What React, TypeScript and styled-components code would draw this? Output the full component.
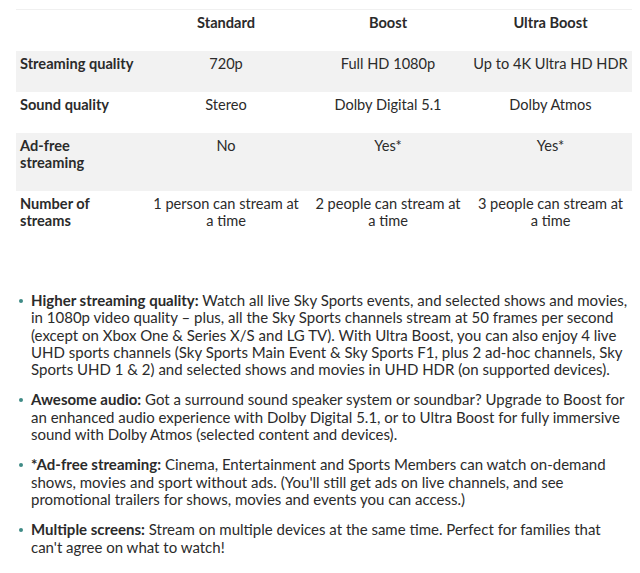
import styled, { createGlobalStyle } from "styled-components";

const GlobalStyle = createGlobalStyle`
    body {
        margin: 0;
        background: white;
        font-family: Lato, "Liberation Sans", sans-serif;
        color: #2b2b2b;
    }
`;

const plans = ["Standard", "Boost", "Ultra Boost"];

const rows = [
    { label: "Streaming quality", values: ["720p", "Full HD 1080p", "Up to 4K Ultra HD HDR"] },
    { label: "Sound quality", values: ["Stereo", "Dolby Digital 5.1", "Dolby Atmos"] },
    { label: "Ad-free streaming", values: ["No", "Yes*", "Yes*"] },
    {
        label: "Number of streams",
        values: [
            "1 person can stream at\na time",
            "2 people can stream at\na time",
            "3 people can stream at\na time",
        ],
    },
];

const notes = [
    {
        title: "Higher streaming quality:",
        text: "Watch all live Sky Sports events, and selected shows and movies, in 1080p video quality – plus, all the Sky Sports channels stream at 50 frames per second (except on Xbox One & Series X/S and LG TV). With Ultra Boost, you can also enjoy 4 live UHD sports channels (Sky Sports Main Event & Sky Sports F1, plus 2 ad-hoc channels, Sky Sports UHD 1 & 2) and selected shows and movies in UHD HDR (on supported devices).",
    },
    {
        title: "Awesome audio:",
        text: "Got a surround sound speaker system or soundbar? Upgrade to Boost for an enhanced audio experience with Dolby Digital 5.1, or to Ultra Boost for fully immersive sound with Dolby Atmos (selected content and devices).",
    },
    {
        title: "*Ad-free streaming:",
        text: "Cinema, Entertainment and Sports Members can watch on-demand shows, movies and sport without ads. (You'll still get ads on live channels, and see promotional trailers for shows, movies and events you can access.)",
    },
    {
        title: "Multiple screens:",
        text: "Stream on multiple devices at the same time. Perfect for families that can't agree on what to watch!",
    },
];

const App = () => {
    return (
        <Page>
            <GlobalStyle />
            <Table>
                <Row>
                    <Label />
                    {plans.map((p) => (
                        <Head key={p}>{p}</Head>
                    ))}
                </Row>
                {rows.map((r, i) => (
                    <Row key={r.label} $shaded={i % 2 === 0}>
                        <Label>{r.label}</Label>
                        {r.values.map((v, j) => (
                            <Cell key={j}>{v}</Cell>
                        ))}
                    </Row>
                ))}
            </Table>
            <Notes>
                {notes.map((n) => (
                    <Note key={n.title}>
                        <strong>{n.title}</strong> {n.text}
                    </Note>
                ))}
            </Notes>
        </Page>
    );
};

export default App;

const Page = styled.div`
    width: 640px;
    height: 573px;
    overflow: hidden;
    padding-top: 9px;
    box-sizing: border-box;
`;

const Table = styled.div`
    margin: 0 8px 0 16px;
    border-top: 1px solid #f0f0f0;
`;

const Row = styled.div<{ $shaded?: boolean }>`
    display: grid;
    grid-template-columns: 129px 162px 162px 163px;
    background: ${(p) => (p.$shaded ? "#f2f2f2" : "white")};
    font-size: 14.6px;
    line-height: 17px;
`;

const Cell = styled.div`
    padding: 4px 3px 20px;
    text-align: center;
    white-space: pre-line;
`;

const Head = styled(Cell)`
    font-weight: 700;
`;

const Label = styled.div`
    padding: 4px 10px 20px 4px;
    font-weight: 700;
`;

const Notes = styled.ul`
    margin: 43px 0 0;
    padding: 0 12px 0 31px;
    font-size: 15px;
    line-height: 17.3px;
`;

const Note = styled.li`
    margin-bottom: 13px;
    list-style: none;
    position: relative;

    &::before {
        content: "";
        position: absolute;
        left: -12px;
        top: 7px;
        width: 4px;
        height: 4px;
        border-radius: 50%;
        background: #3f8b86;
    }

    strong {
        font-weight: 700;
    }
`;
